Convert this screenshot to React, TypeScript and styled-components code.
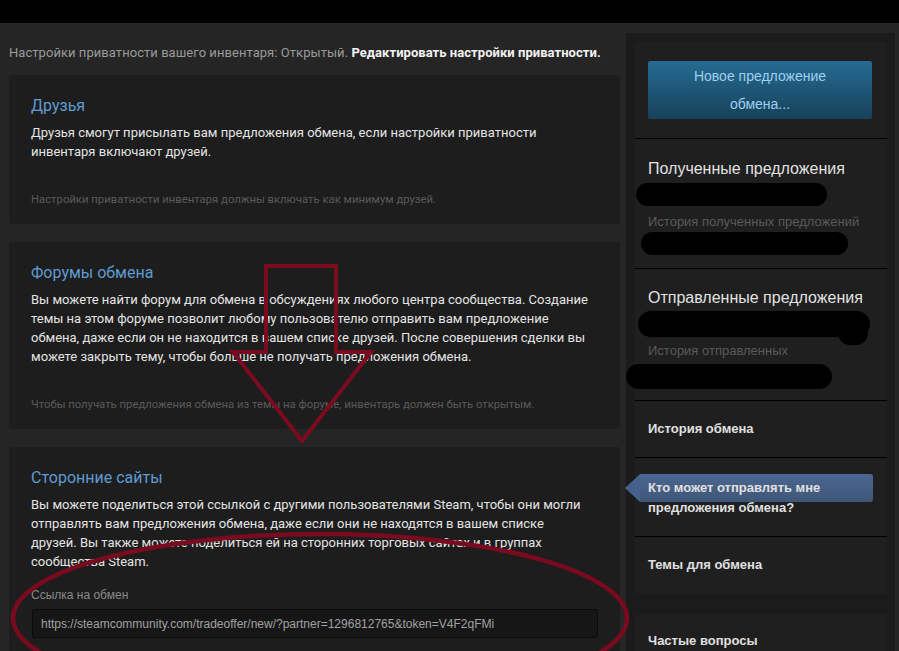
import React from "react";
import styled, { createGlobalStyle } from "styled-components";

const Global = createGlobalStyle`
  html, body { margin: 0; padding: 0; background: #252525; }
  body { font-family: Roboto, "Liberation Sans", Arial, sans-serif; }
  * { box-sizing: border-box; }
`;

const Page = styled.div`
  position: relative;
  width: 899px;
  height: 651px;
  overflow: hidden;
  background: #252525;
`;

const TopBar = styled.div`
  height: 23px;
  background: #000;
`;

const Body = styled.div`
  display: flex;
  align-items: flex-start;
  padding-left: 9px;
`;

const Main = styled.div`
  width: 611px;
  padding-top: 21px;
  display: flex;
  flex-direction: column;
`;

const Privacy = styled.div`
  font-size: 13px;
  line-height: 18px;
  color: #9a9a9a;
  margin-bottom: 13px;
  white-space: nowrap;
  letter-spacing: 0.05px;
  b { color: #f2f2f2; font-weight: 700; }
`;

const Card = styled.div<{ $mb?: number }>`
  background: #1d1d1d;
  border-radius: 3px;
  padding: 20px 22px 16px 22px;
  margin-bottom: ${(p) => p.$mb ?? 18}px;
`;

const CardTitle = styled.div`
  font-size: 16px;
  line-height: 22px;
  color: #5e9bd2;
`;

const CardText = styled.div`
  margin-top: 6px;
  font-size: 13px;
  line-height: 19px;
  color: #e4e4e4;
  padding-right: 8px;
`;

const CardNote = styled.div`
  margin-top: 31px;
  font-size: 11.3px;
  line-height: 16px;
  color: #5a5a5a;
`;

const LinkLabel = styled.div`
  margin-top: 16px;
  font-family: "Liberation Sans", Arial, sans-serif;
  font-size: 12px;
  line-height: 16px;
  color: #8a8a8a;
`;

const LinkBox = styled.div`
  margin-top: 6px;
  height: 29px;
  width: 566px;
  margin-left: 1px;
  background: #161616;
  border: 1px solid #0b0b0b;
  border-radius: 2px;
  padding: 0 8px;
  display: flex;
  align-items: center;
  font-family: "Liberation Sans", Arial, sans-serif;
  font-size: 12px;
  color: #a2a2a2;
  white-space: nowrap;
`;

const Side = styled.div`
  margin-left: 6px;
  margin-top: 10px;
  width: 269px;
  background: #1b1b1b;
  padding: 9px 8px 9px 9px;
  display: flex;
  flex-direction: column;
  gap: 20px;
  font-family: "Liberation Sans", Arial, sans-serif;
`;

const Group = styled.div`
  background: #1f1f1f;
  border-radius: 3px;
  display: flex;
  flex-direction: column;
`;

const Section = styled.div<{ $pt: number; $pb: number; $first?: boolean }>`
  position: relative;
  padding: ${(p) => p.$pt}px 14px ${(p) => p.$pb}px 13px;
  border-top: ${(p) => (p.$first ? "none" : "1px solid #000")};
`;

const NewOffer = styled.div`
  height: 58px;
  margin-right: 1px;
  background: linear-gradient(to bottom, #25698f 5%, #17435c 95%);
  border-radius: 2px;
  color: #9fd0f0;
  font-size: 14px;
  line-height: 28px;
  text-align: center;
  padding: 1px 30px;
`;

const SideTitle = styled.div`
  font-size: 16px;
  line-height: 22px;
  color: #e2e2e2;
  white-space: nowrap;
`;

const SideSub = styled.div<{ $mt: number }>`
  margin-top: ${(p) => p.$mt}px;
  font-size: 13px;
  line-height: 18px;
  color: #5a5a5a;
  white-space: nowrap;
`;

const Redact = styled.div<{ $mt: number; $ml: number; $w: number; $h: number }>`
  margin-top: ${(p) => p.$mt}px;
  margin-left: ${(p) => p.$ml}px;
  width: ${(p) => p.$w}px;
  height: ${(p) => p.$h}px;
  background: #000;
  border-radius: ${(p) => p.$h / 2}px;
  position: relative;
`;

const RedactTail = styled.div`
  position: absolute;
  right: 2px;
  top: 10px;
  width: 30px;
  height: 24px;
  background: #000;
  border-radius: 12px;
`;

const NavItem = styled.div<{ $active?: boolean }>`
  position: relative;
  font-size: 13px;
  font-weight: 700;
  line-height: ${(p) => (p.$active ? 20 : 18)}px;
  color: #e0e0e0;
  z-index: 0;
  ${(p) =>
    p.$active &&
    `
    &::before {
      content: "";
      position: absolute;
      left: -8px;
      right: 0;
      top: -4px;
      height: 28px;
      border-radius: 0 3px 3px 0;
      background: linear-gradient(to bottom, #4b6791, #3e5677);
      z-index: -1;
    }
    &::after {
      content: "";
      position: absolute;
      left: -23px;
      top: -4px;
      width: 0;
      height: 0;
      border-top: 14px solid transparent;
      border-bottom: 14px solid transparent;
      border-right: 15px solid #45608a;
      z-index: -1;
    }
  `}
`;

const Overlay = styled.svg`
  position: absolute;
  left: 0;
  top: 0;
  width: 899px;
  height: 651px;
  pointer-events: none;
`;

export default function App() {
  return (
    <>
      <Global />
      <Page>
        <TopBar />
        <Body>
          <Main>
            <Privacy>
              Настройки приватности вашего инвентаря: Открытый.{" "}
              <b>Редактировать настройки приватности.</b>
            </Privacy>
            <Card>
              <CardTitle>Друзья</CardTitle>
              <CardText>
                Друзья смогут присылать вам предложения обмена, если настройки приватности инвентаря
                включают друзей.
              </CardText>
              <CardNote>Настройки приватности инвентаря должны включать как минимум друзей.</CardNote>
            </Card>
            <Card>
              <CardTitle>Форумы обмена</CardTitle>
              <CardText>
                Вы можете найти форум для обмена в обсуждениях любого центра сообщества. Создание
                темы на этом форуме позволит любому пользователю отправить вам предложение обмена,
                даже если он не находится в вашем списке друзей. После совершения сделки вы можете
                закрыть тему, чтобы больше не получать предложения обмена.
              </CardText>
              <CardNote>
                Чтобы получать предложения обмена из темы на форуме, инвентарь должен быть открытым.
              </CardNote>
            </Card>
            <Card $mb={0}>
              <CardTitle>Сторонние сайты</CardTitle>
              <CardText>
                Вы можете поделиться этой ссылкой с другими пользователями Steam, чтобы они могли
                отправлять вам предложения обмена, даже если они не находятся в вашем списке
                друзей. Вы также можете поделиться ей на сторонних торговых сайтах и в группах
                сообщества Steam.
              </CardText>
              <LinkLabel>Ссылка на обмен</LinkLabel>
              <LinkBox>https://steamcommunity.com/tradeoffer/new/?partner=1296812765&amp;token=V4F2qFMi</LinkBox>
            </Card>
          </Main>
          <Side>
            <Group>
              <Section $first $pt={19} $pb={19}>
                <NewOffer>Новое предложение обмена...</NewOffer>
              </Section>
              <Section $pt={19} $pb={13}>
                <SideTitle>Полученные предложения</SideTitle>
                <Redact $mt={3} $ml={-12} $w={191} $h={23} />
                <SideSub $mt={7}>История полученных предложений</SideSub>
                <Redact $mt={1} $ml={-7} $w={207} $h={23} />
              </Section>
              <Section $pt={18} $pb={11}>
                <SideTitle>Отправленные предложения</SideTitle>
                <Redact $mt={2} $ml={-10} $w={232} $h={26}>
                  <RedactTail />
                </Redact>
                <SideSub $mt={5}>История отправленных</SideSub>
                <Redact $mt={4} $ml={-22} $w={206} $h={25} />
              </Section>
              <Section $pt={19} $pb={19}>
                <NavItem>История обмена</NavItem>
              </Section>
              <Section $pt={20} $pb={18}>
                <NavItem $active>
                  Кто может отправлять мне
                  <br />
                  предложения обмена?
                </NavItem>
              </Section>
              <Section $pt={19} $pb={20}>
                <NavItem>Темы для обмена</NavItem>
              </Section>
            </Group>
            <Group>
              <Section $first $pt={18} $pb={18}>
                <NavItem>Частые вопросы</NavItem>
              </Section>
            </Group>
          </Side>
        </Body>
        <Overlay viewBox="0 0 899 651">
          <polygon
            points="266,266 336,266 336,352 371,352 302,441 233,352 266,352"
            fill="none"
            stroke="#7c0b1f"
            strokeWidth="4"
            strokeLinejoin="miter"
          />
          <ellipse cx="320" cy="618" rx="307" ry="84" fill="none" stroke="#7a0a1e" strokeWidth="4.5" />
        </Overlay>
      </Page>
    </>
  );
}
